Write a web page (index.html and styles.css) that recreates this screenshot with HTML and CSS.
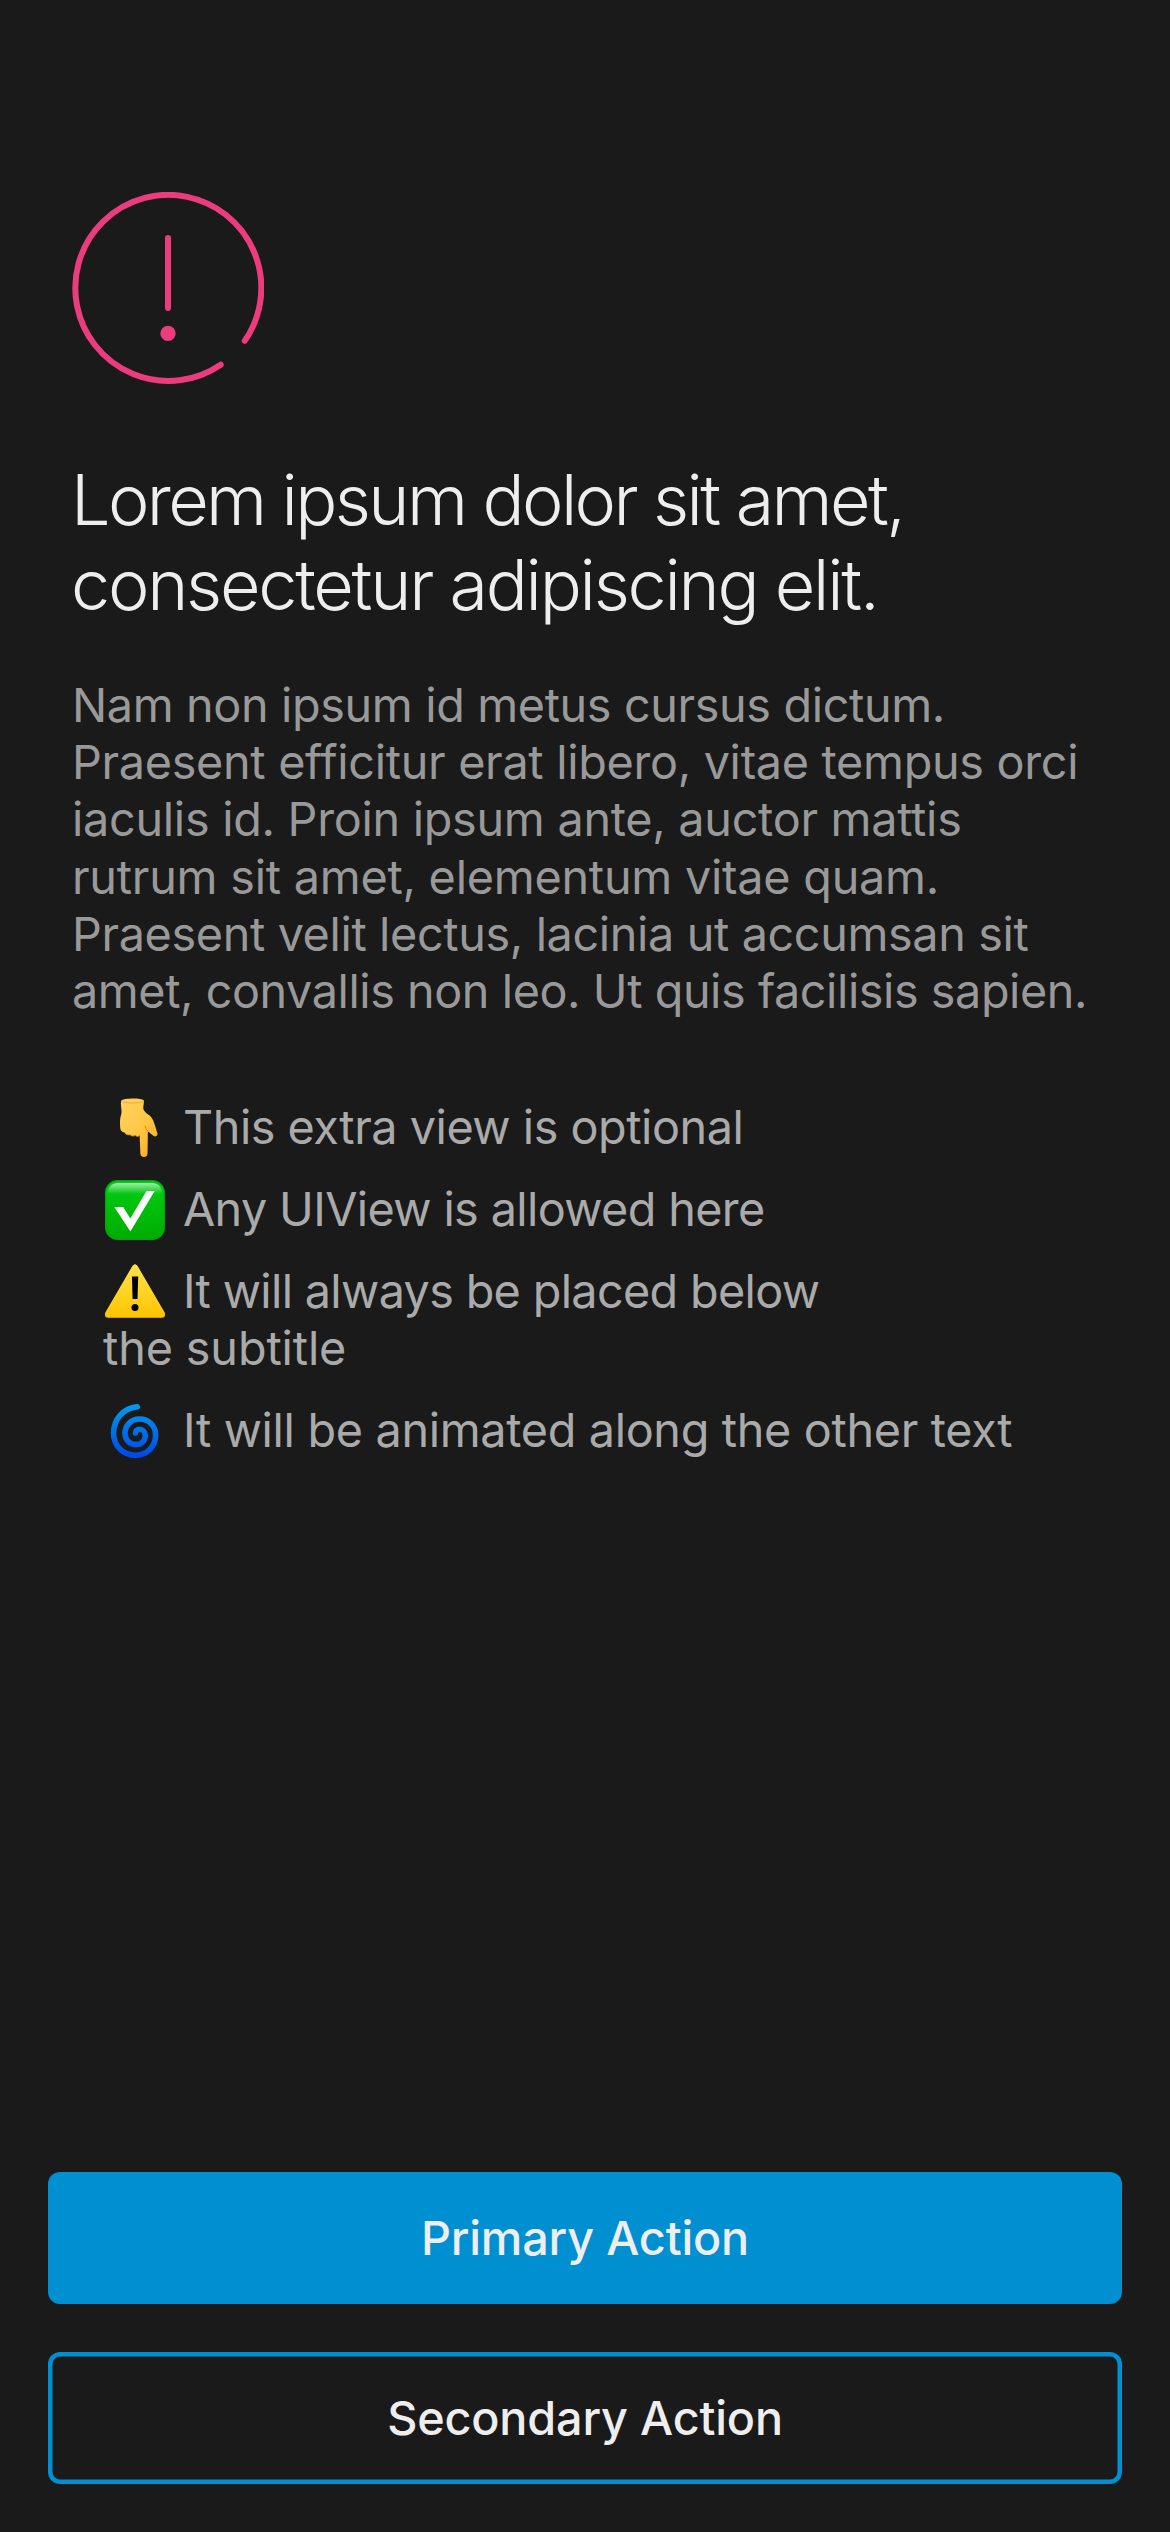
FILE: index.html
```html
<!DOCTYPE html>
<html lang="en">
<head>
<meta charset="utf-8">
<meta name="viewport" content="width=device-width">
<title>Lorem ipsum</title>
<link rel="stylesheet" href="styles.css">
</head>
<body>
<main class="screen">
  <section class="content">
    <svg class="alert-icon" viewBox="0 0 192 192" fill="none" stroke="#eb3c7d" stroke-width="6" stroke-linecap="round">
      <path d="M148.7 172.7A93 93 0 1 1 172.7 148.9"/>
      <path d="M96 46v70"/>
      <circle cx="96" cy="141.4" r="7.7" fill="#eb3c7d" stroke="none"/>
    </svg>

    <h1 class="title">
      <span class="line title-1">Lorem ipsum dolor sit amet,</span>
      <span class="line title-2">consectetur adipiscing elit.</span>
    </h1>

    <p class="subtitle">
      <span class="line sub-1">Nam non ipsum id metus cursus dictum.</span>
      <span class="line sub-2">Praesent efficitur erat libero, vitae tempus orci</span>
      <span class="line sub-3">iaculis id. Proin ipsum ante, auctor mattis</span>
      <span class="line sub-4">rutrum sit amet, elementum vitae quam.</span>
      <span class="line sub-5">Praesent velit lectus, lacinia ut accumsan sit</span>
      <span class="line sub-6">amet, convallis non leo. Ut quis facilisis sapien.</span>
    </p>

    <ul class="notes">
      <li class="note">
        <div class="row note-1">
          <svg class="emoji" viewBox="0 0 60 60">
            <defs><linearGradient id="hand" x1="0" y1="0" x2="1" y2="1"><stop offset="0" stop-color="#ffd360"/><stop offset=".55" stop-color="#ffc744"/><stop offset="1" stop-color="#f5a41a"/></linearGradient></defs>
            <path fill="url(#hand)" d="M16.3 2.6C18.5.2 36.5-.3 38.8 2.6C39.400 4.800 37.800 8.500 38.500 11.500C40 15.500 45.500 16.500 48 22C49.800 26 51 31 52.400 35.300C53 37.600 50.300 39.400 48.300 37.800C46.300 36.300 44.500 34.600 42.900 33.600L42.500 56C42.300 60 35.700 60 35.400 56L34.600 37.500C33.400 39 31.500 38.700 30.300 37.300C28.600 38.500 26.300 38.300 25 36.700C22.800 37.300 20.300 36.600 19.500 34.500C17 34.400 15.200 32.300 15.200 29.500C14.900 25 14.800 20.500 16.200 16.500C17.400 12.500 15 7 16.300 2.600Z"/>
            <path fill="none" stroke="#d98709" stroke-width=".9" stroke-linecap="round" d="M19.500 34.500C21 36.600 23 37.300 25 36.700C26.600 38.300 28.700 38.400 30.300 37.300C31.600 38.800 33.400 38.800 34.600 37.500M42.900 33.600C41.700 31.800 40.500 30 40 28"/>
            <path fill="none" stroke="#e9a32a" stroke-width=".8" d="M16.800 3.500C22 5.500 33 5.500 38.300 3.500"/>
          </svg>
          <span>This extra view is optional</span>
        </div>
      </li>
      <li class="note">
        <div class="row note-2">
          <svg class="emoji" viewBox="0 0 60 60">
            <defs>
              <linearGradient id="tile" x1="0" y1="0" x2="0" y2="1"><stop offset="0" stop-color="#00cf14"/><stop offset="1" stop-color="#00ac00"/></linearGradient>
              <linearGradient id="gloss" x1="0" y1="0" x2="0" y2="1"><stop offset="0" stop-color="#fff" stop-opacity=".62"/><stop offset="1" stop-color="#fff" stop-opacity="0"/></linearGradient>
            </defs>
            <rect width="60" height="60" rx="12.500" fill="#06a010"/>
            <rect x="1.200" y="1.200" width="57.600" height="57.600" rx="11.500" fill="url(#tile)"/>
            <path fill="url(#gloss)" d="M3 14C3 6.500 7 3 13 3H47C53 3 57 6.500 57 14Z"/>
            <path fill="#fff" d="M9.300 27H18.200L25.300 38.500L41.500 11H49.700L25.400 51.500Z"/>
          </svg>
          <span>Any UIView is allowed here</span>
        </div>
      </li>
      <li class="note">
        <div class="row note-3">
          <svg class="emoji" viewBox="0 0 60 60">
            <defs><linearGradient id="sign" x1="0" y1="0" x2="0" y2="1"><stop offset="0" stop-color="#ffdf4a"/><stop offset=".6" stop-color="#ffd21f"/><stop offset="1" stop-color="#ffc400"/></linearGradient></defs>
            <path fill="#d79a00" d="M27.500 4C28.700 1.900 31.300 1.900 32.500 4L59.300 50.500C61 53.500 59.800 56 56.800 56H3.200C.2 56-1 53.500.7 50.500Z"/>
            <path fill="url(#sign)" d="M27.500 4C28.700 1.900 31.300 1.900 32.500 4L59.200 49.800C60.900 52.700 59.800 55 56.800 55H3.200C.2 55-.9 52.700.8 49.800Z"/>
            <path d="M26.900 14.500H33.200L32.500 37H27.600Z"/>
            <circle cx="30" cy="45.500" r="3.500"/>
          </svg>
          <span>It will always be placed below</span>
        </div>
        <span class="line note-3-rest">the subtitle</span>
      </li>
      <li class="note">
        <div class="row note-4">
          <svg class="emoji" viewBox="0 0 60 60">
            <defs><linearGradient id="swirl" gradientUnits="userSpaceOnUse" x1="0" y1="3" x2="0" y2="57"><stop offset="0" stop-color="#009df0"/><stop offset=".5" stop-color="#0071e8"/><stop offset="1" stop-color="#0046e8"/></linearGradient></defs>
            <path fill="none" stroke="url(#swirl)" stroke-width="5.600" stroke-linecap="round" stroke-linejoin="round" d="M32.200 5.800C18 7.500 8.600 18 8.600 32C8.600 45 18 54.300 30.500 54.300C42.500 54.300 50.600 45 50.600 34C50.600 24.500 43.500 18 34.500 18C26 18 20 24.500 20 32.500C20 39 25 43.600 31 43.600C36.500 43.600 40.300 39.500 40.300 34.500C40.300 31 37.700 28.300 34.500 28.300C32.200 28.300 30.500 29.800 30.500 32"/>
          </svg>
          <span>It will be animated along the other text</span>
        </div>
      </li>
    </ul>
  </section>

  <footer class="actions">
    <button class="button primary">Primary Action</button>
    <button class="button secondary">Secondary Action</button>
  </footer>
</main>
</body>
</html>
```
FILE: styles.css
```css
* {
  box-sizing: border-box;
}

body {
  margin: 0;
  background: #1a1a1a;
  font-family: Inter, "Liberation Sans", sans-serif;
}

.screen {
  display: flex;
  flex-direction: column;
  justify-content: space-between;
  height: 2532px;
  padding: 192px 48px 48px;
}

.content {
  padding: 0 24px;
}

.alert-icon {
  display: block;
  width: 192px;
  height: 192px;
}

.line {
  display: block;
  white-space: nowrap;
}

.title {
  margin: 73px 0 0 -1px;
  color: #eee;
  font-size: 70px;
  font-weight: 300;
  line-height: 85px;
}

.title-1 { letter-spacing: -2.62px; }
.title-2 { letter-spacing: -2.25px; }

.subtitle {
  margin: 50px 0 0;
  color: #999;
  font-size: 46.75px;
  line-height: 57.2px;
}

.sub-1 { letter-spacing: -0.37px; }
.sub-2 { letter-spacing: -0.31px; }
.sub-3 { letter-spacing: -0.28px; }
.sub-4 { letter-spacing: -0.24px; }
.sub-5 { letter-spacing: -0.37px; }
.sub-6 { letter-spacing: -0.44px; }

.notes {
  display: flex;
  flex-direction: column;
  gap: 25px;
  margin: 78.8px 0 0;
  padding: 0 0 0 31px;
  list-style: none;
  color: #aaa;
  font-size: 46.75px;
  line-height: 57px;
}

.row {
  display: flex;
  align-items: center;
  gap: 18px;
  height: 57px;
  padding-left: 2px;
  white-space: nowrap;
}

.emoji {
  flex: none;
  width: 60px;
  height: 60px;
}

.note-1 { letter-spacing: -0.47px; }
.note-2 { letter-spacing: -0.63px; }
.note-3 { letter-spacing: -0.66px; }
.note-3-rest { letter-spacing: -0.13px; }
.note-4 { letter-spacing: -0.33px; }

.actions {
  display: flex;
  flex-direction: column;
  gap: 48px;
}

.button {
  height: 132px;
  padding: 0;
  border: 0;
  border-radius: 12px;
  background: transparent;
  color: #eee;
  font: 500 46.75px/57px Inter, "Liberation Sans", sans-serif;
  letter-spacing: -0.17px;
}

.primary {
  background: #0090d1;
}

.secondary {
  box-shadow: inset 0 0 0 4.5px #0090d1;
}
```
